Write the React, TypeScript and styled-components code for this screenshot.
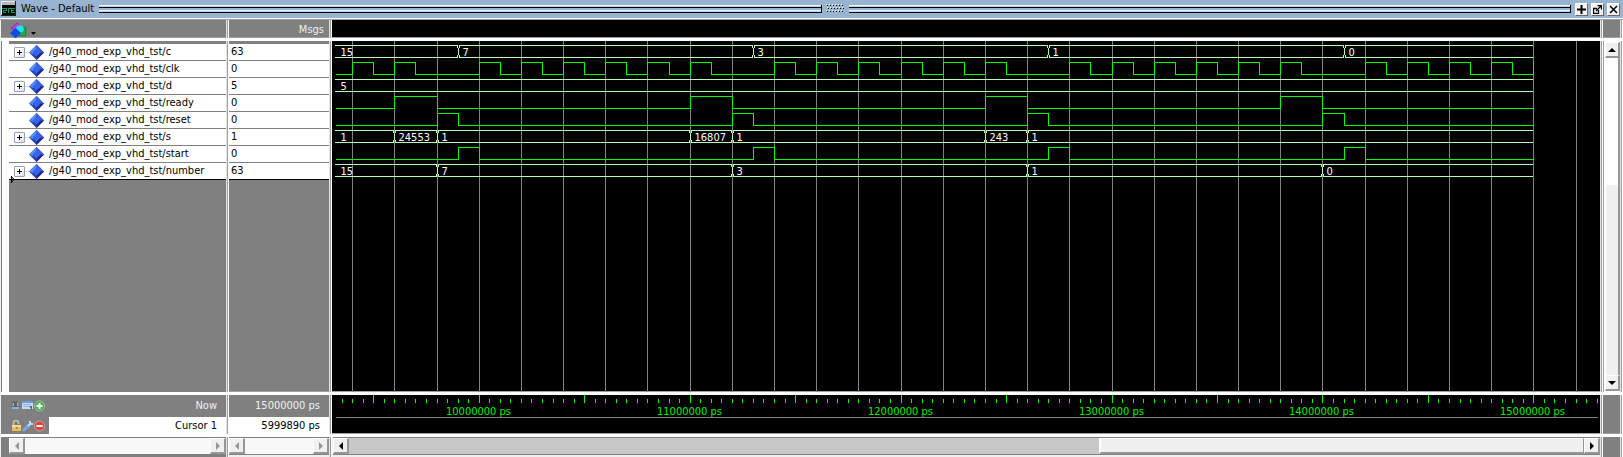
import React from "react";
import styled, { createGlobalStyle, css } from "styled-components";

const UI_FONT = '"DejaVu Sans Condensed", "Noto Sans", sans-serif';

const GlobalStyle = createGlobalStyle`
  *, *::before, *::after { box-sizing: border-box; }
  body {
    margin: 0;
    background: #f0f0f0;
    font-family: ${UI_FONT};
    font-size: 11px;
    line-height: 16px;
    color: #000;
  }
  button { font: inherit; padding: 0; margin: 0; }
  ul { list-style: none; margin: 0; padding: 0; }
`;

/* ---------- signal data; times count clock periods of 200000 ps from 10000000 ps ---------- */

type Span = [number, number];
type Signal =
  | { name: string; value: string; kind: "logic"; high: Span[]; endsHigh?: boolean }
  | { name: string; value: string; kind: "bus"; initial: string; changes: [number, string][] };

const PREFIX = "/g40_mod_exp_vhd_tst/";
const FRAMES = [-1, 6, 13, 20];
const CLOCK_STARTS = [-3, -2, 0, 1, 2, 3, 4, 5, 7, 8, 9, 10, 11, 12, 14, 15, 16, 17, 18, 19, 21, 22, 23, 24];
const END = 25;

const SIGNALS: Signal[] = [
  { name: "c", value: "63", kind: "bus", initial: "15", changes: [[-0.5, "7"], [6.5, "3"], [13.5, "1"], [20.5, "0"]] },
  { name: "clk", value: "0", kind: "logic", high: CLOCK_STARTS.map((k): Span => [k, k + 0.5]), endsHigh: true },
  { name: "d", value: "5", kind: "bus", initial: "5", changes: [] },
  { name: "ready", value: "0", kind: "logic", high: FRAMES.map((k): Span => [k - 1, k]) },
  { name: "reset", value: "0", kind: "logic", high: FRAMES.map((k): Span => [k, k + 0.5]) },
  {
    name: "s", value: "1", kind: "bus", initial: "1",
    changes: [[-2, "24553"], [-1, "1"], [5, "16807"], [6, "1"], [12, "243"], [13, "1"]],
  },
  { name: "start", value: "0", kind: "logic", high: FRAMES.map((k): Span => [k + 0.5, k + 1]) },
  { name: "number", value: "63", kind: "bus", initial: "15", changes: [[-1, "7"], [6, "3"], [13, "1"], [20, "0"]] },
];

const timeToX = (k: number) => Math.floor(147.22 + 42.187 * k);

/* ---------- frame ---------- */

const Window = styled.main`
  display: flex;
  flex-direction: column;
  min-height: 100vh;
`;

const TitleBar = styled.header`
  display: flex;
  align-items: center;
  gap: 4px;
  height: 20px;
  padding: 0 4px 2px 1px;
  background: #99b4d1;
  border-bottom: 1px solid #a0a0a0;
  box-shadow: inset 0 -1px #fff;
`;

const Title = styled.h1`
  margin: 0 1px;
  font-size: 11px;
  font-weight: 400;
  white-space: nowrap;
`;

const Grip = styled.div`
  flex: 1;
  height: 8px;
  background: linear-gradient(#e2f6ff 0 1px, #b9d1ea 1px 2px, #000 2px 3px, #99b4d1 3px 5px, #e2f6ff 5px 6px, #b9d1ea 6px 7px, #000 7px 8px);
  border-right: 1px solid #000;
`;

const TitleButton = styled.button`
  display: grid;
  place-items: center;
  width: 12px;
  height: 12px;
  background: #f2f2f2;
  border: 0;
  border-top: 1px solid #fff;
  border-left: 1px solid #fff;
  box-shadow: 1px 1px #696969;
`;

const TitleButtons = styled.div`
  display: flex;
  gap: 4px;
`;

const Panes = styled.div`
  flex: 1;
  display: grid;
  grid-template-columns: 228px 103px minmax(0, 1fr) 20px;
  grid-template-rows: 21px minmax(180px, 1fr) 42px 20px;
  border-left: 1px solid #f0f0f0;
`;

const Cell = styled.div<{ $tone?: string; $last?: boolean }>`
  position: relative;
  min-width: 0;
  overflow: hidden;
  background: ${(p) => p.$tone ?? "#808080"};
  border-right: 1px solid #fff;
  border-bottom: ${(p) => (p.$last ? 0 : 3)}px solid #fff;
  box-shadow: inset -1px 0 #a0a0a0, inset -2px 0 #e3e3e3, inset 0 -1px ${(p) => (p.$last ? "transparent" : "#a0a0a0")};
  padding-right: 2px;
`;

const HeaderCell = styled(Cell)<{ $end?: boolean }>`
  display: flex;
  align-items: center;
  justify-content: ${(p) => (p.$end ? "flex-end" : "flex-start")};
  padding: 2px 7px 0 9px;
  color: #f0f0f0;
`;

const ColumnMenu = styled.button`
  display: flex;
  background: none;
  border: 0;
`;

const NameBody = styled(Cell)`
  padding-left: 8px;
  box-shadow: inset -1px 0 #a0a0a0, inset -2px 0 #e3e3e3, inset 1px 0 #808080, inset 8px 0 #fff;
`;

const List = styled.ul`
  border-top: 3px solid #808080;
`;

const Row = styled.li`
  display: flex;
  align-items: center;
  height: 17px;
  padding-left: 2px;
  background: #fff;
  border-bottom: 1px solid #808080;
  white-space: nowrap;
  &:last-child { border-bottom-color: #000; }
`;

const Twist = styled.span`
  display: flex;
  align-items: center;
  width: 15px;
  height: 11px;
  margin: 1px 0 0 3px;
`;

const ExpandButton = styled.button`
  display: grid;
  place-items: center;
  width: 11px;
  height: 11px;
  background: linear-gradient(135deg, #fff 40%, #d8dce8);
  border: 1px solid #98a0b4;
  border-radius: 1px;
`;

const Dots = styled.span`
  flex: 1;
  height: 1px;
  background: #d8d8d8;
`;

const RowName = styled.span`
  padding-left: 5px;
`;

const InsertMark = styled.svg`
  position: absolute;
  left: 9px;
  top: 134px;
`;

const FooterCell = styled(Cell)`
  display: flex;
  flex-direction: column;
`;

const FooterRow = styled.div<{ $cursor?: boolean }>`
  display: flex;
  align-items: center;
  height: ${(p) => (p.$cursor ? 17 : 22)}px;
  color: ${(p) => (p.$cursor ? "#000" : "#f0f0f0")};
  white-space: nowrap;
`;

const ToolIcons = styled.span`
  display: flex;
  align-items: center;
  width: 48px;
  height: 100%;
  padding-left: 9px;
  background: #808080;
`;

const FooterText = styled.span<{ $white?: boolean }>`
  flex: 1;
  align-self: stretch;
  display: flex;
  align-items: center;
  justify-content: flex-end;
  padding-right: 9px;
  background: ${(p) => (p.$white ? "#fff" : "#808080")};
`;

const IconButton = styled.button`
  display: flex;
  width: 12px;
  height: 12px;
  background: none;
  border: 0;
`;

/* ---------- scroll bars ---------- */

const HScroll = styled.div<{ $inset?: number }>`
  display: flex;
  height: 18px;
  margin-left: ${(p) => p.$inset ?? 0}px;
  border-top: 1px solid #808080;
  border-bottom: 1px solid #808080;
  background: #f8f8f8;
`;

const VScroll = styled.div`
  display: flex;
  flex-direction: column;
  height: 100%;
  padding: 1px 0 1px 1px;
  background: #fff;
  border-left: 1px solid #a0a0a0;
`;

const ScrollButton = styled.button<{ $vertical?: boolean }>`
  flex: none;
  display: grid;
  place-items: center;
  width: ${(p) => (p.$vertical ? "auto" : "16px")};
  height: 16px;
  background: #f0f0f0;
  border: 1px solid #fff;
  border-right: 2px solid #969696;
  border-bottom: 2px solid #969696;
`;

const Track = styled.div<{ $grow: number; $tone: string }>`
  flex: ${(p) => p.$grow} 1 0;
  background: ${(p) => p.$tone};
`;

const Thumb = styled(Track)<{ $vertical?: boolean }>`
  ${(p) =>
    p.$vertical
      ? css`border-left: 1px solid #fff; border-right: 2px solid #969696;`
      : css`border: solid #fff; border-width: 1px 0 0 2px; border-right: 1px solid #969696; border-bottom: 2px solid #969696;`}
`;

const WaveSvg = styled.svg`
  display: block;
  width: 1268px;
  text {
    font-family: ${UI_FONT};
    font-size: 11px;
  }
`;

const Arrow = ({ dir, dim }: { dir: "left" | "right" | "up" | "down"; dim?: boolean }) => {
  const d = { left: "M6 0v8L2 4z", right: "M2 0v8L6 4z", up: "M0 6h8L4 2z", down: "M0 2h8L4 6z" }[dir];
  return (
    <svg width="8" height="8" viewBox="0 0 8 8" aria-hidden="true">
      <path d={d} fill={dim ? "#969696" : "#000"} />
    </svg>
  );
};

/* ---------- icons ---------- */

const WaveLogo = () => (
  <svg width="15" height="15" viewBox="0 0 15 15" shapeRendering="crispEdges" aria-hidden="true">
    <path d="M0 0h15v15H0z" fill="#222" />
    <path d="M0 0h14v14H0z" fill="#e8e8e8" />
    <path d="M1 1h13v3H1z" fill="#b8b8b8" />
    <path d="M1 4h13v10H1z" fill="#000" />
    <path d="M1 7.500h4v2h-3v2h3M7 12V7.500h3v4h4M10 7.500h4M10 9.500h3" fill="none" stroke="#0c9f5b" />
  </svg>
);

const SignalIcon = () => (
  <svg width="15" height="15" viewBox="0 0 15 15" aria-hidden="true">
    <path d="M7.500 0 15 7.500 7.500 15 0 7.500z" fill="#2b45b8" />
    <path d="M7.500 0 0 7.500 4 9 7.500 4z" fill="#5b8cf4" />
    <path d="M7.500 0 15 7.500 11 8 7.500 4z" fill="#3d62dc" />
    <path d="M15 7.500 7.500 15V11l3.500-3.500z" fill="#28248c" />
    <path d="M7.500 3.500 11.500 7.500 7.500 11.500 3.500 7.500z" fill="#2f67ee" />
  </svg>
);

const GroupIcon = () => (
  <svg width="26" height="17" viewBox="0 0 26 17" aria-hidden="true">
    <path d="M1 6 7 1l6 5-3 2H4z" fill="#c23be0" stroke="#7c1c94" strokeWidth=".6" />
    <path d="M9 5h7v9H9z" fill="#25a24a" stroke="#14702c" strokeWidth=".6" />
    <circle cx="10" cy="7" r="3.800" fill="#1fe2f6" />
    <path d="m5.500 6 5.500 5-5.500 5.500L0 11z" fill="#0a4fe0" />
    <path d="M21 10h5l-2.500 3z" fill="#000" />
  </svg>
);

const BinocularsIcon = () => (
  <svg width="11" height="11" viewBox="0 0 11 11" aria-hidden="true">
    <path d="M3 1h2v1h1V1h2l2 6H1z" fill="#5c6468" />
    <path d="M3 3h1v3H2zM7 2h1l1 4H7z" fill="#a8b0b4" />
    <path d="M1 7h9v2H1z" fill="#5c8cd0" />
    <path d="M2 8h7" stroke="#c8dcf4" />
  </svg>
);

const NoteIcon = () => (
  <svg width="11" height="11" viewBox="0 0 11 11" aria-hidden="true">
    <path d="M0 1h11v8H0z" fill="#c9def5" />
    <path d="M0 1h11v2H0z" fill="#6a9cdc" />
    <path d="M1 4.500h8M1 6.500h6" stroke="#8fb0da" />
    <path d="M7 6h3v4z" fill="#44648c" />
  </svg>
);

const RoundIcon = ({ tone, plus }: { tone: string; plus?: boolean }) => (
  <svg width="11" height="12" viewBox="0 0 11 12" aria-hidden="true">
    <circle cx="5.500" cy="6" r="5" fill={tone} stroke="#d8e4d4" strokeWidth=".5" />
    <path d={plus ? "M2.500 6h6M5.500 3v6" : "M2.500 6h6"} stroke="#fff" strokeWidth="2" />
  </svg>
);

const LockIcon = () => (
  <svg width="12" height="12" viewBox="0 0 12 12" aria-hidden="true">
    <path d="M3.500 6V3a2.500 2.500 0 0 1 5 0v1" fill="none" stroke="#c8c0a8" strokeWidth="1.500" />
    <path d="M2 5h9v6H2z" fill="#f0bc54" />
    <path d="M2 5h9v2H2z" fill="#fadc90" />
    <path d="M7 7v2" stroke="#8c6418" />
  </svg>
);

const WrenchIcon = () => (
  <svg width="12" height="12" viewBox="0 0 12 12" aria-hidden="true">
    <path d="m2 10 4.500-4.500" stroke="#7ca8e8" strokeWidth="3" strokeLinecap="round" />
    <path d="M6 6 8 4M8 1v3l3 0" fill="none" stroke="#c4d8ec" strokeWidth="2" />
  </svg>
);

/* ---------- wave drawing ---------- */

const LogicTrace = ({ y, high, endsHigh }: { y: number; high: Span[]; endsHigh?: boolean }) => {
  const path = high.map(([a, b]) => `H${timeToX(a)}V${y}H${timeToX(b)}V${y + 12}`).join("");
  return (
    <path d={`M4 ${y + 12}${path}H${timeToX(END)}${endsHigh ? `V${y}` : ""}`} fill="none" stroke="#00ff00" strokeLinecap="square" />
  );
};

const BusTrace = ({ y, initial, changes }: { y: number; initial: string; changes: [number, string][] }) => {
  const stops = [...changes.map(([k]) => timeToX(k)), timeToX(END)];
  const lines: string[] = [];
  let from = 3;
  stops.forEach((x, i) => {
    const last = i === stops.length - 1;
    lines.push(`M${from} ${y}H${x - 1}${last ? "" : "v2"}M${from} ${y + 12}H${x - 1}${last ? "" : "v-2"}`);
    if (!last) lines.push(`M${x} ${y + 3}v6M${x + 1} ${y}v2M${x + 1} ${y + 12}v-2`);
    from = x + 1;
  });
  return (
    <g>
      <path d={lines.join("")} fill="none" stroke="#b4ffb4" strokeLinecap="square" />
      <text x={8} y={y + 10} fill="#fff">{initial}</text>
      {changes.map(([k, label]) => (
        <text key={k} x={timeToX(k) + 4} y={y + 10} fill="#fff">{label}</text>
      ))}
    </g>
  );
};

const GRID = Array.from({ length: 30 }, (_, i) => i - 3);

const WaveCanvas = () => (
  <WaveSvg height="351" role="img" aria-label="Signal waveforms">
    <g transform="translate(.5 .5)" shapeRendering="crispEdges">
      <path d={GRID.map((k) => `M${timeToX(k)} -1V350`).join("")} stroke="#808080" />
      {SIGNALS.map((s, i) =>
        s.kind === "logic" ? (
          <LogicTrace key={s.name} y={4 + 17 * i} high={s.high} endsHigh={s.endsHigh} />
        ) : (
          <BusTrace key={s.name} y={4 + 17 * i} initial={s.initial} changes={s.changes} />
        ),
      )}
    </g>
  </WaveSvg>
);

const TICKS = Array.from({ length: 120 }, (_, i) => -3.25 + i * 0.25);
const LABELS = [10, 11, 12, 13, 14, 15];

const Ruler = () => (
  <WaveSvg height="39" role="img" aria-label="Time ruler">
    <g transform="translate(.5 .5)" shapeRendering="crispEdges">
      <path
        d={TICKS.map((k) => (k % 2.5 === 0 ? `M${timeToX(k)} -1v8` : `M${timeToX(k)} 3v4`)).join("")}
        stroke="#00ff00"
      />
      <path d="M3 22H1265" stroke="#808080" />
      {LABELS.map((m) => (
        <text key={m} x={timeToX((m - 10) * 5) - 1} y={19} textAnchor="middle" fill="#00f000">{`${m}000000 ps`}</text>
      ))}
    </g>
  </WaveSvg>
);

const GripDots = () => (
  <svg width="19" height="9" viewBox="0 0 19 9" shapeRendering="crispEdges" aria-hidden="true">
    {[0, 3, 6].map((y) =>
      Array.from({ length: 6 }, (_, i) => (
        <g key={`${y}-${i}`}>
          <rect x={i * 3 + (y === 3 ? 1 : 0)} y={y} width="1" height="1" fill="#fff" />
          <rect x={i * 3 + 1 + (y === 3 ? 1 : 0)} y={y + 1} width="1" height="1" fill="#000" />
        </g>
      )),
    )}
  </svg>
);

const PaneScroll = ({ inset }: { inset?: number }) => (
  <HScroll $inset={inset}>
    <ScrollButton aria-label="Scroll left" disabled><Arrow dir="left" dim /></ScrollButton>
    <Track $grow={1} $tone="#f8f8f8" />
    <ScrollButton aria-label="Scroll right" disabled><Arrow dir="right" dim /></ScrollButton>
  </HScroll>
);

export default function App() {
  return (
    <>
      <GlobalStyle />
      <Window>
        <TitleBar>
          <WaveLogo />
          <Title>Wave - Default</Title>
          <Grip />
          <GripDots />
          <Grip />
          <TitleButtons>
            <TitleButton aria-label="Zoom window">
              <svg width="9" height="9" viewBox="0 0 9 9"><path d="M4.500 0v9M0 4.500h9" stroke="#000" strokeWidth="2" /></svg>
            </TitleButton>
            <TitleButton aria-label="Undock">
              <svg width="9" height="9" viewBox="0 0 9 9"><path d="M4 3.500H.5v5h5V5M3 6l5-5M4.500.5h4v4" fill="none" stroke="#000" strokeWidth="1.300" /></svg>
            </TitleButton>
            <TitleButton aria-label="Close">
              <svg width="9" height="9" viewBox="0 0 9 9"><path d="m1 1 7 7M8 1 1 8" stroke="#000" strokeWidth="1.500" /></svg>
            </TitleButton>
          </TitleButtons>
        </TitleBar>
        <Panes>
          <HeaderCell>
            <ColumnMenu aria-label="Signal options"><GroupIcon /></ColumnMenu>
          </HeaderCell>
          <HeaderCell $end>Msgs</HeaderCell>
          <Cell $tone="#000" />
          <Cell />

          <NameBody>
            <List>
              {SIGNALS.map((s) => (
                <Row key={s.name}>
                  <Twist>
                    {s.kind === "bus" && (
                      <>
                        <ExpandButton aria-label={`Expand ${s.name}`}>
                          <svg width="7" height="7" viewBox="0 0 7 7" shapeRendering="crispEdges"><path d="M1 3.500h5M3.500 1v5" stroke="#000" /></svg>
                        </ExpandButton>
                        <Dots />
                      </>
                    )}
                  </Twist>
                  <SignalIcon />
                  <RowName>{PREFIX + s.name}</RowName>
                </Row>
              ))}
            </List>
            <InsertMark width="5" height="9" viewBox="0 0 5 9" aria-hidden="true">
              <path d="M1.500 1v7M1.500 1.500 4 4.500 1.500 7.500" fill="none" stroke="#000" />
            </InsertMark>
          </NameBody>
          <Cell>
            <List>
              {SIGNALS.map((s) => <Row key={s.name}>{s.value}</Row>)}
            </List>
          </Cell>
          <Cell $tone="#000"><WaveCanvas /></Cell>
          <Cell $tone="#fff">
            <VScroll>
              <ScrollButton $vertical aria-label="Scroll up"><Arrow dir="up" /></ScrollButton>
              <Thumb $vertical $grow={127} $tone="#fff" />
              <Thumb $vertical $grow={190} $tone="#f0f0f0" />
              <ScrollButton $vertical aria-label="Scroll down"><Arrow dir="down" /></ScrollButton>
            </VScroll>
          </Cell>

          <FooterCell>
            <FooterRow>
              <ToolIcons>
                <IconButton aria-label="Find"><BinocularsIcon /></IconButton>
                <IconButton aria-label="Edit grid"><NoteIcon /></IconButton>
                <IconButton aria-label="Add cursor"><RoundIcon tone="#4cae4c" plus /></IconButton>
              </ToolIcons>
              <FooterText>Now</FooterText>
            </FooterRow>
            <FooterRow $cursor>
              <ToolIcons>
                <IconButton aria-label="Lock cursor"><LockIcon /></IconButton>
                <IconButton aria-label="Edit cursor"><WrenchIcon /></IconButton>
                <IconButton aria-label="Remove cursor"><RoundIcon tone="#e0473c" /></IconButton>
              </ToolIcons>
              <FooterText $white>Cursor 1</FooterText>
            </FooterRow>
          </FooterCell>
          <FooterCell>
            <FooterRow><FooterText>15000000 ps</FooterText></FooterRow>
            <FooterRow $cursor><FooterText $white>5999890 ps</FooterText></FooterRow>
          </FooterCell>
          <Cell $tone="#000"><Ruler /></Cell>
          <Cell />

          <Cell $last><PaneScroll inset={8} /></Cell>
          <Cell $last $tone="#f0f0f0"><PaneScroll /></Cell>
          <Cell $last $tone="#f0f0f0">
            <HScroll $inset={1}>
              <ScrollButton aria-label="Scroll left"><Arrow dir="left" /></ScrollButton>
              <Track $grow={752} $tone="#c8c8c8" />
              <Thumb $grow={483} $tone="#f0f0f0" />
              <ScrollButton aria-label="Scroll right"><Arrow dir="right" /></ScrollButton>
            </HScroll>
          </Cell>
          <Cell $last />
        </Panes>
      </Window>
    </>
  );
}
